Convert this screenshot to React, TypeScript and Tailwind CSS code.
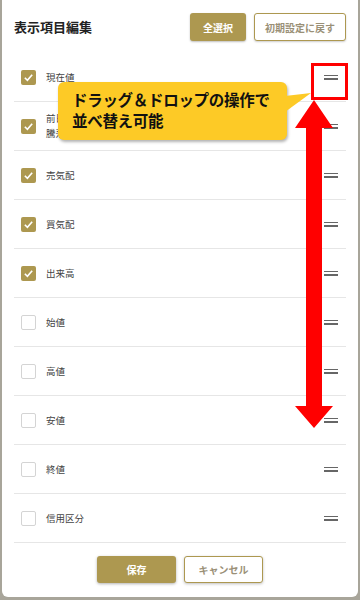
import React, { useState } from 'react';

type Item = { id: string; label: string[]; checked: boolean };

const initialItems: Item[] = [
    { id: 'current', label: ['現在値'], checked: true },
    { id: 'change', label: ['前日比', '騰落率'], checked: true },
    { id: 'ask', label: ['売気配'], checked: true },
    { id: 'bid', label: ['買気配'], checked: true },
    { id: 'volume', label: ['出来高'], checked: true },
    { id: 'open', label: ['始値'], checked: false },
    { id: 'high', label: ['高値'], checked: false },
    { id: 'low', label: ['安値'], checked: false },
    { id: 'close', label: ['終値'], checked: false },
    { id: 'margin', label: ['信用区分'], checked: false },
];

const Checkbox: React.FC<{ checked: boolean; onChange: () => void }> = ({ checked, onChange }) => (
    <button
        onClick={onChange}
        className={
            checked
                ? 'w-[15px] h-[15px] rounded-[2px] bg-[#ad9850] flex items-center justify-center'
                : 'w-[15px] h-[15px] rounded-[2px] border border-[#d4d4d4] bg-white'
        }
    >
        {checked && (
            <svg width="11" height="11" viewBox="0 0 12 12">
                <path d="M2 6.3 L4.8 9 L10 3" fill="none" stroke="white" strokeWidth="1.8" />
            </svg>
        )}
    </button>
);

const Handle = () => (
    <div className="flex flex-col gap-[2px] w-[14px]">
        <div className="h-[1.5px] bg-[#666]" />
        <div className="h-[1.5px] bg-[#666]" />
    </div>
);

export default function App() {
    const [items, setItems] = useState(initialItems);

    const toggle = (id: string) =>
        setItems(items.map(i => (i.id === id ? { ...i, checked: !i.checked } : i)));

    return (
        <div className="w-[360px] h-[600px] bg-[#a8a59a] overflow-hidden" style={{ fontFamily: '"Noto Sans CJK JP", "Noto Sans", sans-serif' }}>
            <div className="relative mx-[2px] h-[597px] bg-white rounded-b-[6px] flex flex-col">
                {/* header */}
                <div className="flex justify-between pl-[12px] pr-[12px] pt-[13px] h-[53px] items-start">
                    <h2 className="text-[13px] font-bold text-[#222] mt-[4px]">表示項目編集</h2>
                    <div className="flex gap-[8px]">
                        <button className="w-[56px] h-[28px] rounded-[3px] bg-[#ad9850] text-white text-[10px] font-bold shadow-[0_1px_2px_rgba(0,0,0,0.25)]">
                            全選択
                        </button>
                        <button className="w-[92px] h-[28px] rounded-[3px] border-[1.5px] border-[#ad9850] bg-white text-[#9a9077] text-[10px] font-bold shadow-[0_1px_2px_rgba(0,0,0,0.2)]">
                            初期設定に戻す
                        </button>
                    </div>
                </div>

                {/* list */}
                <ul className="mx-[12px]">
                    {items.map(item => (
                        <li key={item.id} className="h-[49px] border-b-[1.5px] border-[#e6e6e6] flex items-center pl-[7px] pr-[8px]">
                            <Checkbox checked={item.checked} onChange={() => toggle(item.id)} />
                            <div className="ml-[10px] text-[9.5px] leading-[15px] text-[#444] flex-1">
                                {item.label.map(l => (
                                    <div key={l}>{l}</div>
                                ))}
                            </div>
                            <Handle />
                        </li>
                    ))}
                </ul>

                {/* footer */}
                <div className="flex justify-center gap-[8px] mt-[13px]">
                    <button className="w-[79px] h-[27px] rounded-[3px] bg-[#ad9850] text-white text-[10px] font-bold shadow-[0_1px_3px_rgba(0,0,0,0.3)]">
                        保存
                    </button>
                    <button className="w-[79px] h-[27px] rounded-[3px] border-[1.5px] border-[#ad9850] bg-white text-[#9a9077] text-[10px] font-bold shadow-[0_1px_3px_rgba(0,0,0,0.25)]">
                        キャンセル
                    </button>
                </div>

                {/* annotation: highlight box on handle */}
                <div className="absolute left-[309px] top-[63px] w-[37px] h-[37px] border-[3px] border-[#ff0000]" />

                {/* annotation: double arrow */}
                <svg className="absolute left-[292px] top-[100px]" width="40" height="330" viewBox="0 0 40 330">
                    <polygon points="20,0 39,28 28,28 28,306 39,306 20,328 1,306 12,306 12,28 1,28" fill="#ff0000" />
                </svg>

                {/* annotation: callout */}
                <div className="absolute left-[56px] top-[82px] w-[229px] h-[58px] bg-[#fdca26] rounded-[6px] shadow-[1px_2px_3px_rgba(0,0,0,0.3)] pl-[14px] pt-[7px] text-[15.5px] leading-[21px] font-bold text-[#111] whitespace-nowrap tracking-[-0.3px]">
                    <div>ドラッグ＆ドロップの操作で</div>
                    <div>並べ替え可能</div>
                </div>
                <svg className="absolute left-[283px] top-[90px]" width="28" height="30" viewBox="0 0 28 30">
                    <polygon points="0,6 26,3 0,22" fill="#fdca26" />
                </svg>
            </div>
        </div>
    );
}
